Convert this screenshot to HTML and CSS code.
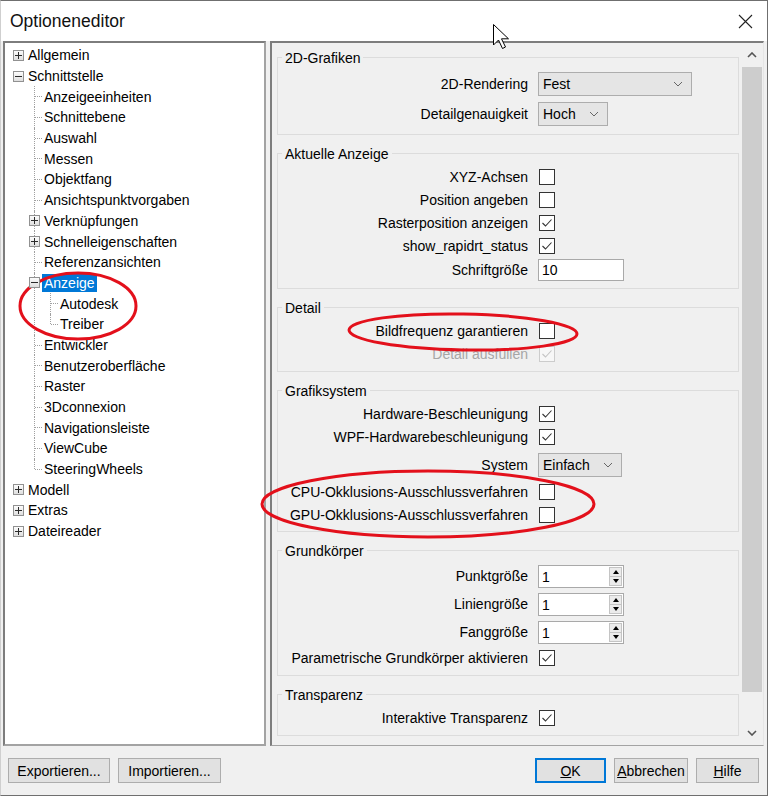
FILE: index.html
```html
<!DOCTYPE html>
<html lang="de">
<head>
  <meta charset="UTF-8">
  <title>Optioneneditor</title>
  <link rel="stylesheet" href="styles.css">
</head>
<body>
  <div class="window">
    <header class="titlebar">
      <span class="title">Optioneneditor</span>
      <svg class="close" width="15" height="15" viewBox="0 0 15 15"><path d="M1 1L14 14M14 1L1 14" stroke="#222" stroke-width="1.1" fill="none"/></svg>
    </header>

    <div class="panes">
      <div class="tree-pane">
        <ul class="tree">
          <li><div class="item"><span class="gutter"><span class="box plus"></span></span><span class="label">Allgemein</span></div></li>
          <li>
            <div class="item"><span class="gutter"><span class="box"></span></span><span class="label">Schnittstelle</span></div>
            <ul class="sub">
              <li><div class="item leaf"><span class="gutter"></span><span class="label">Anzeigeeinheiten</span></div></li>
              <li><div class="item leaf"><span class="gutter"></span><span class="label">Schnittebene</span></div></li>
              <li><div class="item leaf"><span class="gutter"></span><span class="label">Auswahl</span></div></li>
              <li><div class="item leaf"><span class="gutter"></span><span class="label">Messen</span></div></li>
              <li><div class="item leaf"><span class="gutter"></span><span class="label">Objektfang</span></div></li>
              <li><div class="item leaf"><span class="gutter"></span><span class="label">Ansichtspunktvorgaben</span></div></li>
              <li><div class="item"><span class="gutter"><span class="box plus"></span></span><span class="label">Verknüpfungen</span></div></li>
              <li><div class="item"><span class="gutter"><span class="box plus"></span></span><span class="label">Schnelleigenschaften</span></div></li>
              <li><div class="item leaf"><span class="gutter"></span><span class="label">Referenzansichten</span></div></li>
              <li>
                <div class="item"><span class="gutter"><span class="box"></span></span><span class="label selected">Anzeige</span></div>
                <ul class="sub">
                  <li><div class="item leaf"><span class="gutter"></span><span class="label">Autodesk</span></div></li>
                  <li><div class="item leaf"><span class="gutter"></span><span class="label">Treiber</span></div></li>
                </ul>
              </li>
              <li><div class="item leaf"><span class="gutter"></span><span class="label">Entwickler</span></div></li>
              <li><div class="item leaf"><span class="gutter"></span><span class="label">Benutzeroberfläche</span></div></li>
              <li><div class="item leaf"><span class="gutter"></span><span class="label">Raster</span></div></li>
              <li><div class="item leaf"><span class="gutter"></span><span class="label">3Dconnexion</span></div></li>
              <li><div class="item leaf"><span class="gutter"></span><span class="label">Navigationsleiste</span></div></li>
              <li><div class="item leaf"><span class="gutter"></span><span class="label">ViewCube</span></div></li>
              <li><div class="item leaf"><span class="gutter"></span><span class="label">SteeringWheels</span></div></li>
            </ul>
          </li>
          <li><div class="item"><span class="gutter"><span class="box plus"></span></span><span class="label">Modell</span></div></li>
          <li><div class="item"><span class="gutter"><span class="box plus"></span></span><span class="label">Extras</span></div></li>
          <li><div class="item"><span class="gutter"><span class="box plus"></span></span><span class="label">Dateireader</span></div></li>
        </ul>
      </div>

      <div class="opt-pane">
        <div class="opt-content">
          <div class="group">
            <span class="legend">2D-Grafiken</span>
            <div class="rows">
              <div class="row tall"><span class="lbl">2D-Rendering</span><div class="combo w-fest"><span>Fest</span><svg width="10" height="6" viewBox="0 0 10 6"><path d="M1 1L5 5L9 1" stroke="#666" fill="none"/></svg></div></div>
              <div class="row tall"><span class="lbl">Detailgenauigkeit</span><div class="combo w-hoch"><span>Hoch</span><svg width="10" height="6" viewBox="0 0 10 6"><path d="M1 1L5 5L9 1" stroke="#666" fill="none"/></svg></div></div>
            </div>
          </div>

          <div class="group">
            <span class="legend">Aktuelle Anzeige</span>
            <div class="rows">
              <div class="row"><span class="lbl">XYZ-Achsen</span><span class="check"></span></div>
              <div class="row"><span class="lbl">Position angeben</span><span class="check"></span></div>
              <div class="row"><span class="lbl">Rasterposition anzeigen</span><span class="check"><svg width="14" height="14" viewBox="0 0 14 14"><path d="M2.5 7L5.5 10L11.5 3.5" stroke="#333" stroke-width="1.1" fill="none"/></svg></span></div>
              <div class="row"><span class="lbl">show_rapidrt_status</span><span class="check"><svg width="14" height="14" viewBox="0 0 14 14"><path d="M2.5 7L5.5 10L11.5 3.5" stroke="#333" stroke-width="1.1" fill="none"/></svg></span></div>
              <div class="row text-row"><span class="lbl">Schriftgröße</span><div class="textbox">10</div></div>
            </div>
          </div>

          <div class="group">
            <span class="legend">Detail</span>
            <div class="rows">
              <div class="row"><span class="lbl">Bildfrequenz garantieren</span><span class="check"></span></div>
              <div class="row h24 disabled"><span class="lbl">Detail ausfüllen</span><span class="check"><svg width="14" height="14" viewBox="0 0 14 14"><path d="M2.5 7L5.5 10L11.5 3.5" stroke="#c4c4c4" stroke-width="1.1" fill="none"/></svg></span></div>
            </div>
          </div>

          <div class="group">
            <span class="legend">Grafiksystem</span>
            <div class="rows">
              <div class="row"><span class="lbl">Hardware-Beschleunigung</span><span class="check"><svg width="14" height="14" viewBox="0 0 14 14"><path d="M2.5 7L5.5 10L11.5 3.5" stroke="#333" stroke-width="1.1" fill="none"/></svg></span></div>
              <div class="row h24"><span class="lbl">WPF-Hardwarebeschleunigung</span><span class="check"><svg width="14" height="14" viewBox="0 0 14 14"><path d="M2.5 7L5.5 10L11.5 3.5" stroke="#333" stroke-width="1.1" fill="none"/></svg></span></div>
              <div class="row h31"><span class="lbl">System</span><div class="combo w-einfach"><span>Einfach</span><svg width="10" height="6" viewBox="0 0 10 6"><path d="M1 1L5 5L9 1" stroke="#666" fill="none"/></svg></div></div>
              <div class="row"><span class="lbl">CPU-Okklusions-Ausschlussverfahren</span><span class="check"></span></div>
              <div class="row"><span class="lbl">GPU-Okklusions-Ausschlussverfahren</span><span class="check"></span></div>
            </div>
          </div>

          <div class="group">
            <span class="legend">Grundkörper</span>
            <div class="rows">
              <div class="row spin-row"><span class="lbl">Punktgröße</span><div class="spin"><span class="val">1</span><span class="spin-btns"><span class="up"></span><span class="down"></span></span></div></div>
              <div class="row spin-row"><span class="lbl">Liniengröße</span><div class="spin"><span class="val">1</span><span class="spin-btns"><span class="up"></span><span class="down"></span></span></div></div>
              <div class="row spin-row"><span class="lbl">Fanggröße</span><div class="spin"><span class="val">1</span><span class="spin-btns"><span class="up"></span><span class="down"></span></span></div></div>
              <div class="row h24"><span class="lbl">Parametrische Grundkörper aktivieren</span><span class="check"><svg width="14" height="14" viewBox="0 0 14 14"><path d="M2.5 7L5.5 10L11.5 3.5" stroke="#333" stroke-width="1.1" fill="none"/></svg></span></div>
            </div>
          </div>

          <div class="group">
            <span class="legend">Transparenz</span>
            <div class="rows">
              <div class="row h24"><span class="lbl">Interaktive Transparenz</span><span class="check"><svg width="14" height="14" viewBox="0 0 14 14"><path d="M2.5 7L5.5 10L11.5 3.5" stroke="#333" stroke-width="1.1" fill="none"/></svg></span></div>
            </div>
          </div>
        </div>

        <div class="vscroll">
          <div class="sb-btn"><svg width="10" height="6" viewBox="0 0 10 6"><path d="M1 5L5 1L9 5" stroke="#555" stroke-width="1.6" fill="none"/></svg></div>
          <div class="sb-track"><div class="sb-thumb"></div></div>
          <div class="sb-btn"><svg width="10" height="6" viewBox="0 0 10 6"><path d="M1 1L5 5L9 1" stroke="#555" stroke-width="1.6" fill="none"/></svg></div>
        </div>
      </div>
    </div>

    <footer class="footer">
      <div class="btn-group">
        <button class="btn w-export">Exportieren...</button>
        <button class="btn w-import">Importieren...</button>
      </div>
      <div class="btn-group">
        <button class="btn default w-ok"><u>O</u>K</button>
        <button class="btn w-cancel"><u>A</u>bbrechen</button>
        <button class="btn w-help"><u>H</u>ilfe</button>
      </div>
    </footer>

    <!-- annotations drawn over the screenshot -->
    <svg class="marks" width="768" height="796" viewBox="0 0 768 796">
      <ellipse cx="78" cy="306" rx="58" ry="33" stroke="#e3101b" stroke-width="3" fill="none"/>
      <ellipse cx="463" cy="332" rx="114" ry="18" stroke="#e3101b" stroke-width="3" fill="none" transform="rotate(1 463 332)"/>
      <ellipse cx="428" cy="504" rx="166" ry="33" stroke="#e3101b" stroke-width="3" fill="none"/>
      <path d="M493.5 24.5L493.5 45L498.5 40L502.5 48.5L505.5 47L501.5 38.8L508.5 38.8Z" fill="#fff" stroke="#000" stroke-width="1"/>
    </svg>
  </div>
</body>
</html>
```

FILE: styles.css
```css
body {
  margin: 0;
  font-family: "Liberation Sans", Arial, sans-serif;
  font-size: 14px;
  color: #000;
  background: #f0f0f0;
}
.window {
  position: relative;
  width: 768px;
  height: 796px;
  box-sizing: border-box;
  border: 1px solid #6f6f6f;
  border-left-color: #cfcfcf;
  background: #f0f0f0;
  display: flex;
  flex-direction: column;
  overflow: hidden;
}
.titlebar {
  height: 40px;
  flex: none;
  background: #fff;
  display: flex;
  align-items: center;
  justify-content: space-between;
  padding: 0 14px 0 9px;
}
.title {
  font-size: 17.5px;
  color: #111;
}
.panes {
  height: 705px;
  flex: none;
  display: flex;
  gap: 4px;
  padding: 0 3px 0 2px;
}

/* tree */
.tree-pane {
  width: 263px;
  box-sizing: border-box;
  border: 2px solid;
  border-color: #7d7d7d #a3a3a3 #a3a3a3 #7d7d7d;
  background: #fff;
  padding: 2px 0 0 5px;
}
.tree, .sub {
  list-style: none;
  margin: 0;
  padding: 0;
}
.sub {
  padding-left: 16px;
}
.tree li {
  position: relative;
}
.sub > li::before {
  content: '';
  position: absolute;
  left: 8px;
  top: 0;
  bottom: 0;
  border-left: 1px dotted #a0a0a0;
}
.sub > li:last-child::before {
  bottom: auto;
  height: 10px;
}
.item {
  height: 20.7px;
  display: flex;
  align-items: center;
}
.gutter {
  width: 16px;
  height: 100%;
  flex: none;
  position: relative;
  display: flex;
  align-items: center;
  justify-content: center;
}
.leaf .gutter::after {
  content: '';
  position: absolute;
  left: 9px;
  right: 0;
  top: 10px;
  border-top: 1px dotted #a0a0a0;
}
.box {
  position: relative;
  z-index: 1;
  width: 11px;
  height: 11px;
  box-sizing: border-box;
  border: 1px solid #919191;
  background: linear-gradient(#fcfcfc, #dedede);
  margin-left: 1px;
}
.box::before {
  content: '';
  position: absolute;
  left: 1px;
  top: 4px;
  width: 7px;
  height: 1px;
  background: #2a2a2a;
}
.box.plus::after {
  content: '';
  position: absolute;
  left: 4px;
  top: 1px;
  width: 1px;
  height: 7px;
  background: #2a2a2a;
}
.label {
  padding: 0 2px;
  line-height: 18px;
  white-space: nowrap;
}
.label.selected {
  background: #0078d7;
  color: #fff;
}

/* options */
.opt-pane {
  flex: 1;
  display: flex;
  box-sizing: border-box;
  border: 2px solid;
  border-color: #7d7d7d #e6e6e6 #a3a3a3 #7d7d7d;
  border-right-width: 1px;
  border-bottom-width: 1px;
}
.opt-content {
  flex: 1;
  padding: 14px 3px 0 5px;
  overflow: hidden;
}
.group {
  border: 1px solid #dcdcdc;
  padding-bottom: 5px;
}
.group + .group {
  margin-top: 18px;
}
.legend {
  display: block;
  width: fit-content;
  margin: -9px 0 0 4px;
  padding: 0 3px;
  line-height: 18px;
  background: #f0f0f0;
}
.rows {
  padding-top: 2px;
}
.row {
  height: 23px;
  display: grid;
  grid-template-columns: 250px auto;
  column-gap: 10px;
  align-items: center;
}
.row.tall { height: 30px; }
.row.h24 { height: 24px; }
.row.h31 { height: 31px; }
.row.text-row { height: 26px; }
.row.spin-row { height: 28px; }
.lbl {
  display: flex;
  justify-content: flex-end;
  white-space: nowrap;
}
.disabled .lbl {
  color: #a6a6a6;
}
.check {
  width: 16px;
  height: 16px;
  box-sizing: border-box;
  border: 1px solid #333;
  background: #fff;
  margin-left: 1px;
  display: flex;
  align-items: center;
  justify-content: center;
}
.disabled .check {
  border-color: #cccccc;
  background: #f7f7f7;
}
.combo {
  height: 24px;
  box-sizing: border-box;
  border: 1px solid #adadad;
  background: #e5e5e5;
  display: flex;
  align-items: center;
  justify-content: space-between;
  padding: 0 8px 0 4px;
}
.w-fest { width: 154px; }
.w-hoch { width: 70px; }
.w-einfach { width: 84px; }
.textbox {
  width: 86px;
  height: 22px;
  box-sizing: border-box;
  border: 1px solid #a9a9a9;
  background: #fff;
  padding-left: 3px;
  line-height: 20px;
}
.spin {
  width: 86px;
  height: 23px;
  box-sizing: border-box;
  border: 1px solid #a9a9a9;
  background: #fff;
  display: flex;
  justify-content: space-between;
  padding: 1px;
}
.spin .val {
  padding-left: 2px;
  line-height: 20px;
}
.spin-btns {
  width: 13px;
  display: flex;
  flex-direction: column;
  border: 1px solid #c4c4c4;
  box-sizing: border-box;
  background: #ebebeb;
}
.spin-btns span {
  flex: 1;
  display: flex;
  align-items: center;
  justify-content: center;
}
.spin-btns .up {
  border-bottom: 1px solid #c4c4c4;
}
.spin-btns .up::before {
  content: '';
  border-left: 3.5px solid transparent;
  border-right: 3.5px solid transparent;
  border-bottom: 4px solid #000;
}
.spin-btns .down::before {
  content: '';
  border-left: 3.5px solid transparent;
  border-right: 3.5px solid transparent;
  border-top: 4px solid #000;
}

/* scrollbar */
.vscroll {
  width: 21px;
  display: flex;
  flex-direction: column;
}
.sb-btn {
  height: 24px;
  display: flex;
  align-items: center;
  justify-content: center;
  padding-right: 1px;
}
.sb-track {
  flex: 1;
}
.sb-thumb {
  height: 625px;
  width: 20px;
  background: #cdcdcd;
}

/* buttons */
.footer {
  flex: 1;
  display: flex;
  justify-content: space-between;
  align-items: flex-start;
  padding: 12px 8px 0 7px;
}
.btn-group {
  display: flex;
  gap: 8px;
}
.btn {
  height: 25px;
  box-sizing: border-box;
  border: 1px solid #adadad;
  background: #e1e1e1;
  font-family: "Liberation Sans", Arial, sans-serif;
  font-size: 14px;
  color: #000;
  padding: 0;
}
.btn.default {
  border-color: #0078d7;
  box-shadow: inset 0 0 0 1px #0078d7;
}
.w-export { width: 102px; }
.w-import { width: 103px; }
.w-ok { width: 71px; }
.w-cancel { width: 74px; }
.w-help { width: 63px; }

.marks {
  position: absolute;
  left: -1px;
  top: -1px;
  pointer-events: none;
}
```
